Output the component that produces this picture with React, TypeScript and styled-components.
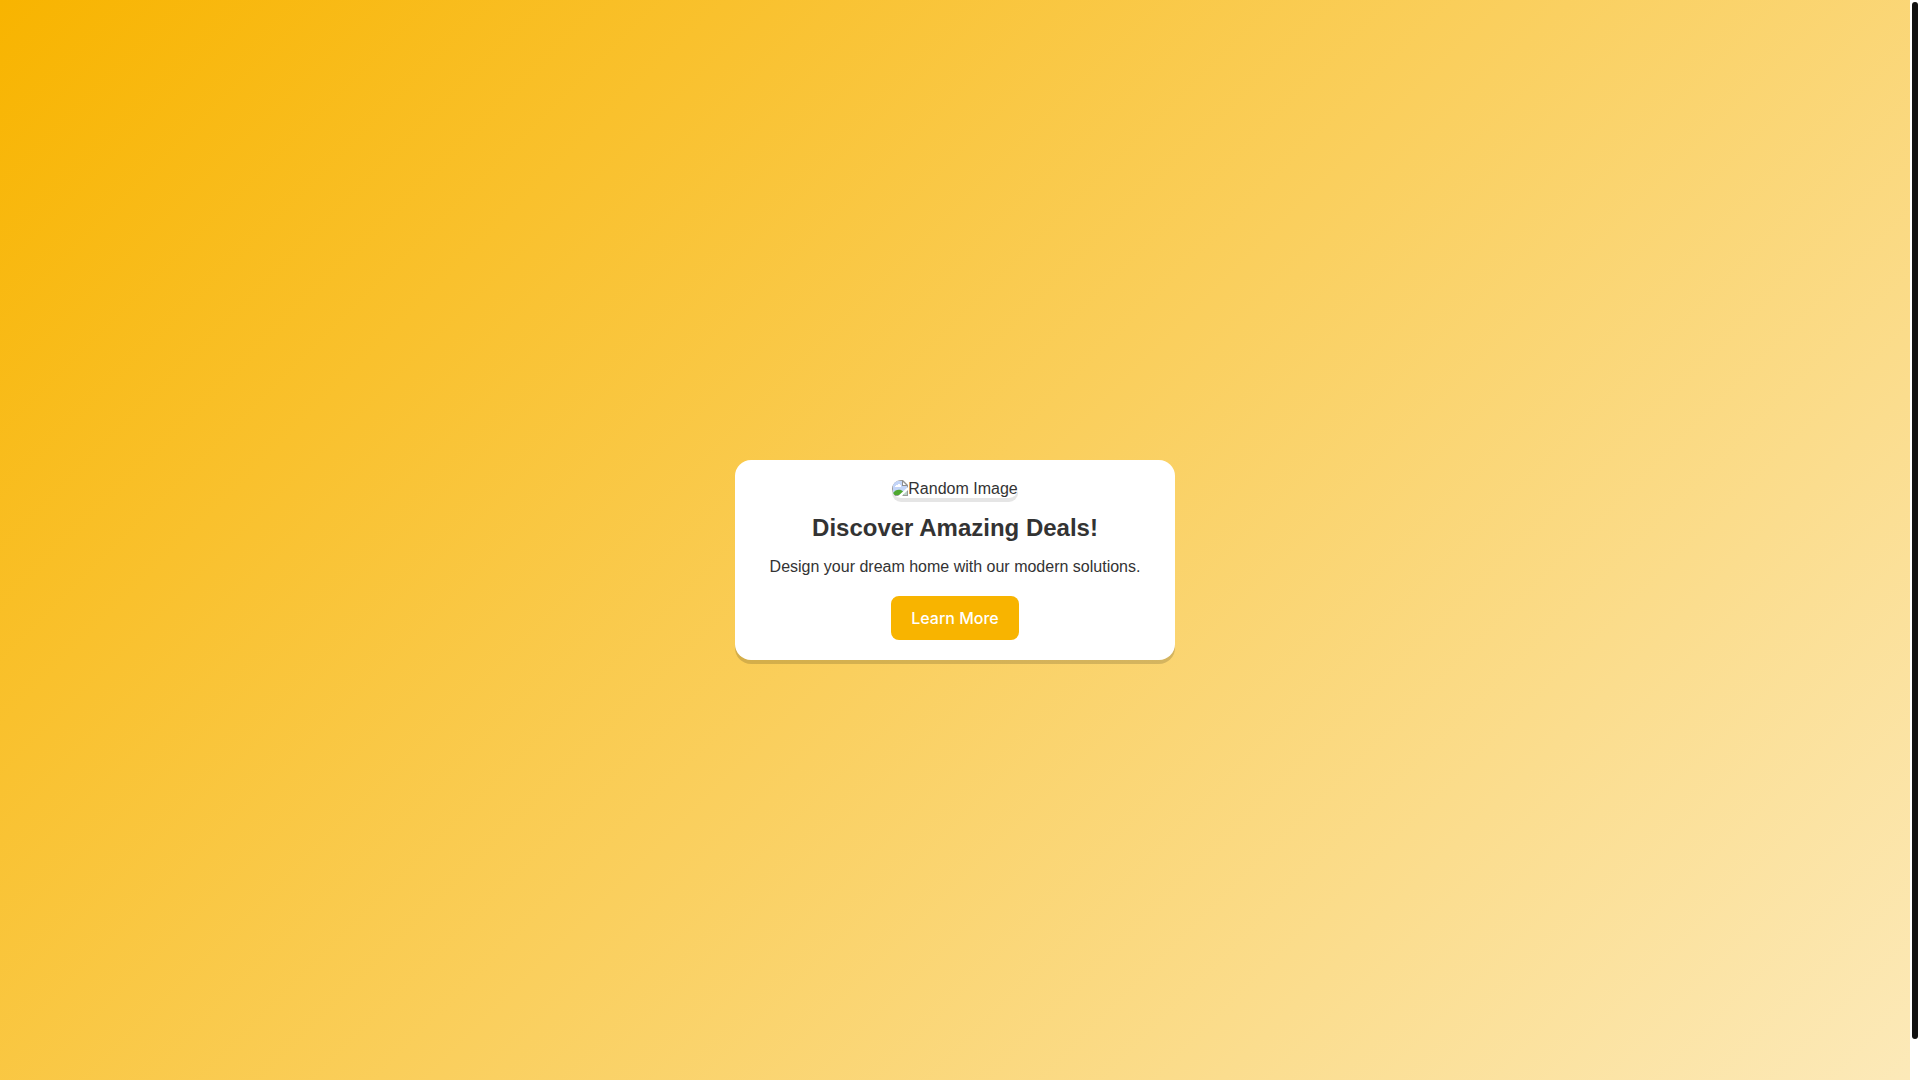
import React from "react";
import styled, { createGlobalStyle } from "styled-components";

const GlobalStyle = createGlobalStyle`
  body {
    margin: 0;
    color: #333;
    font: 16px/18px "Liberation Sans", Arial, sans-serif;
    scrollbar-width: none;
  }
`;

const Layout = styled.div`
  display: grid;
  grid-template-columns: 1fr 10px;
  align-items: start;
`;

const Page = styled.main`
  display: flex;
  align-items: center;
  justify-content: center;
  min-height: 100vh;
  padding: 20px;
  background: linear-gradient(135deg, #f8b400, #fceabb);
`;

const ScrollTrack = styled.div`
  position: sticky;
  top: 0;
  box-sizing: border-box;
  height: 100vh;
  padding: 2px;
  background: #fff;
`;

const ScrollThumb = styled.div`
  height: 96vh;
  background: #111;
  border-radius: 3px;
`;

const Card = styled.section`
  display: flex;
  flex-direction: column;
  align-items: center;
  box-sizing: border-box;
  width: 100%;
  max-width: 440px;
  padding: 20px;
  text-align: center;
  background: #fff;
  border-radius: 16px;
  box-shadow: 0 4px 0 rgba(0, 0, 0, 0.15);
`;

const ImageFallback = styled.div`
  display: flex;
  overflow: hidden;
  border-radius: 12px;
  box-shadow: 0 4px 0 rgba(0, 0, 0, 0.1);
`;

const Title = styled.h1`
  margin: 16px 0;
  font-size: 24px;
  line-height: 28px;
`;

const Description = styled.p`
  margin: 0 0 20px;
`;

const Button = styled.button`
  padding: 12px 20px;
  color: #fff;
  font: 500 16px/20px Inter, sans-serif;
  background: #f8b400;
  border: 0;
  border-radius: 8px;
  cursor: pointer;
`;

const BrokenImageIcon = () => (
  <svg width="16" height="16" viewBox="0 0 16 16" aria-hidden="true">
    <path d="M0 0H11L16 5V16H0Z" fill="#9a9a9a" />
    <path d="M1 1H10V6H15V15H1Z" fill="#c3d5f8" />
    <path d="M3 7V6H4V5H6V4H8V5H9V7Z" fill="#fff" />
    <path d="M1 15V13C3 10 6 9 9 10L12 12V15Z" fill="#4fa830" />
    <path d="M10 0V6H16Z" fill="#8e8e8e" />
    <path d="M11 2V5H14Z" fill="#fff" />
    <path d="M16 7V10L10 16H6Z" fill="#fff" />
    <path d="M15 11V15H11Z" fill="#b9d3c4" />
  </svg>
);

export default function App() {
  return (
    <>
      <GlobalStyle />
      <Layout>
        <Page>
          <Card>
            <ImageFallback>
              <BrokenImageIcon />
              <span>Random Image</span>
            </ImageFallback>
            <Title>Discover Amazing Deals!</Title>
            <Description>Design your dream home with our modern solutions.</Description>
            <Button type="button">Learn More</Button>
          </Card>
        </Page>
        <ScrollTrack aria-hidden="true">
          <ScrollThumb />
        </ScrollTrack>
      </Layout>
    </>
  );
}
